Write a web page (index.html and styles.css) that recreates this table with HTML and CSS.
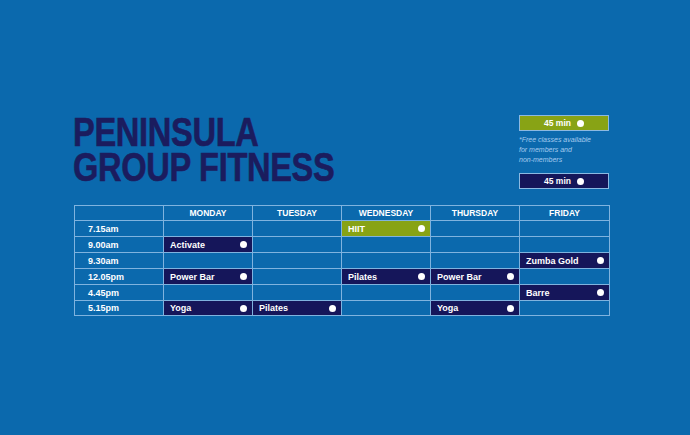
FILE: index.html
```html
<!DOCTYPE html>
<html lang="en">
<head>
<meta charset="utf-8">
<title>Peninsula Group Fitness</title>
<link rel="stylesheet" href="styles.css">
</head>
<body>
<main class="page">
  <section class="top">
    <h1 class="title"><span class="line">PENINSULA</span><span class="line">GROUP FITNESS</span></h1>
    <aside class="legend">
      <div class="tag tag-green">45 min <span class="dot"></span></div>
      <p class="note">*Free classes available<br>for members and<br>non-members</p>
      <div class="tag tag-navy">45 min <span class="dot"></span></div>
    </aside>
  </section>
  <section class="timetable">
    <div class="hd"></div>
    <div class="hd">MONDAY</div>
    <div class="hd">TUESDAY</div>
    <div class="hd">WEDNESDAY</div>
    <div class="hd">THURSDAY</div>
    <div class="hd">FRIDAY</div>

    <div class="time">7.15am</div>
    <div class="c"></div>
    <div class="c"></div>
    <div class="c cls green">HIIT <span class="dot"></span></div>
    <div class="c"></div>
    <div class="c"></div>

    <div class="time">9.00am</div>
    <div class="c cls">Activate <span class="dot"></span></div>
    <div class="c"></div>
    <div class="c"></div>
    <div class="c"></div>
    <div class="c"></div>

    <div class="time">9.30am</div>
    <div class="c"></div>
    <div class="c"></div>
    <div class="c"></div>
    <div class="c"></div>
    <div class="c cls">Zumba Gold <span class="dot"></span></div>

    <div class="time">12.05pm</div>
    <div class="c cls">Power Bar <span class="dot"></span></div>
    <div class="c"></div>
    <div class="c cls">Pilates <span class="dot"></span></div>
    <div class="c cls">Power Bar <span class="dot"></span></div>
    <div class="c"></div>

    <div class="time">4.45pm</div>
    <div class="c"></div>
    <div class="c"></div>
    <div class="c"></div>
    <div class="c"></div>
    <div class="c cls">Barre <span class="dot"></span></div>

    <div class="time">5.15pm</div>
    <div class="c cls">Yoga <span class="dot"></span></div>
    <div class="c cls">Pilates <span class="dot"></span></div>
    <div class="c"></div>
    <div class="c cls">Yoga <span class="dot"></span></div>
    <div class="c"></div>
  </section>
</main>
</body>
</html>
```
FILE: styles.css
```css
* { box-sizing: border-box; }
html, body { margin: 0; padding: 0; }
body {
  background: #0b69ad;
  width: 690px;
  height: 435px;
  overflow: hidden;
  font-family: "Liberation Sans", Arial, sans-serif;
  color: #ffffff;
}
.page {
  padding: 115px 81px 0 74px;
}
.top {
  display: flex;
  justify-content: space-between;
  align-items: flex-start;
  height: 90px;
}
.title {
  margin: 0 0 0 -1px;
  font-family: "Liberation Sans", Arial, sans-serif;
  font-weight: 700;
  font-size: 40px;
  line-height: 35px;
  color: #1b1c5e;
  letter-spacing: -0.4px;
  -webkit-text-stroke: 0.6px #1b1c5e;
  transform: scaleX(0.815);
  transform-origin: left top;
  white-space: nowrap;
}
.title .line {
  display: block;
  height: 35px;
}
.legend {
  width: 90px;
  display: flex;
  flex-direction: column;
}
.tag {
  height: 16px;
  border: 1px solid #8cb9e2;
  display: flex;
  align-items: center;
  justify-content: center;
  gap: 6px;
  font-size: 8.5px;
  font-weight: 700;
}
.tag-green { background: #88a315; }
.tag-navy { background: #15165a; }
.note {
  margin: 4px 0 8px 0;
  font-size: 7px;
  line-height: 10px;
  font-style: italic;
  color: #a5cbef;
}
.dot {
  width: 7px;
  height: 7px;
  border-radius: 50%;
  background: #ffffff;
  flex: none;
}
.timetable {
  display: grid;
  grid-template-columns: 88px 88px 88px 88px 88px 89px;
  grid-template-rows: 14px 15px 15px 15px 15px 15px 14px;
  gap: 1px;
  padding: 1px;
  width: 536px;
  background: #7fb3df;
}
.timetable > div {
  background: #0b69ad;
  font-size: 9px;
  font-weight: 700;
  display: flex;
  align-items: center;
}
.timetable > .hd {
  justify-content: center;
  font-size: 8.5px;
}
.timetable > .time {
  padding-left: 13px;
}
.timetable > .cls {
  background: #15165a;
  justify-content: space-between;
  padding: 0 5px 0 6px;
}
.timetable > .cls.green {
  background: #88a315;
}
```
